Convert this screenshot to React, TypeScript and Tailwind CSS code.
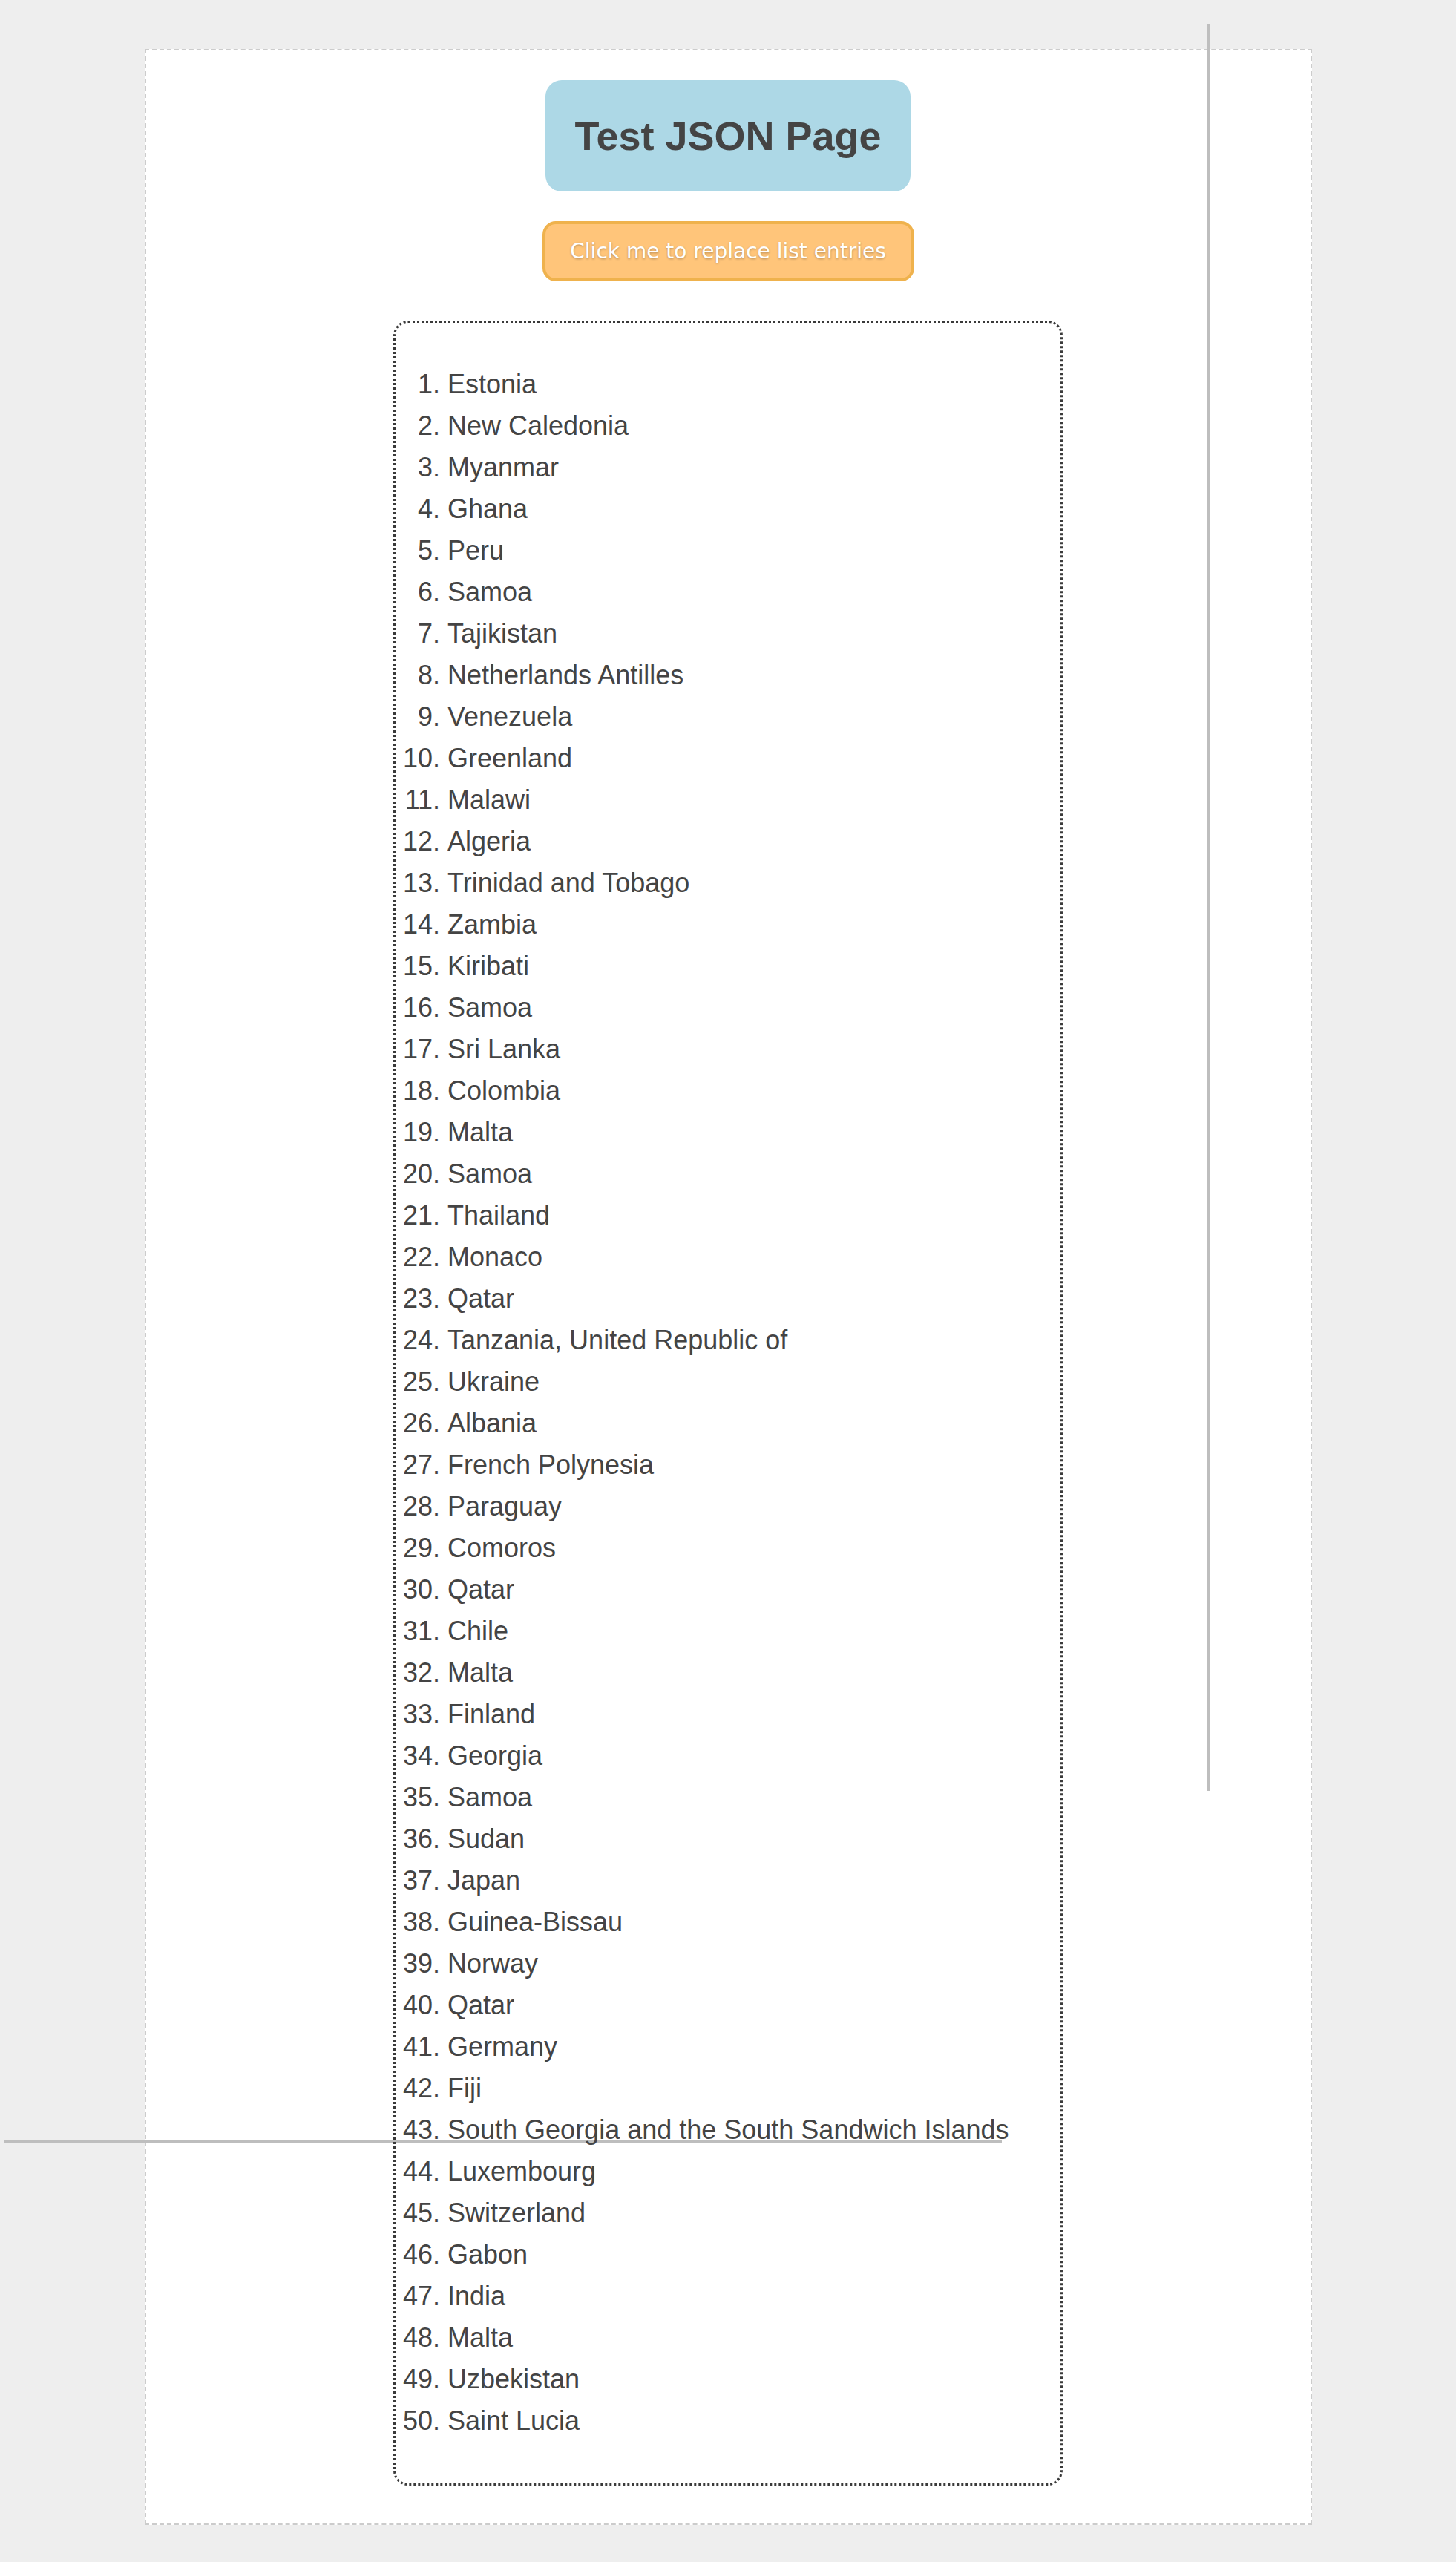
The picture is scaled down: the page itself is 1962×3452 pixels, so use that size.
import React from "react";

const countries = [
  "Estonia",
  "New Caledonia",
  "Myanmar",
  "Ghana",
  "Peru",
  "Samoa",
  "Tajikistan",
  "Netherlands Antilles",
  "Venezuela",
  "Greenland",
  "Malawi",
  "Algeria",
  "Trinidad and Tobago",
  "Zambia",
  "Kiribati",
  "Samoa",
  "Sri Lanka",
  "Colombia",
  "Malta",
  "Samoa",
  "Thailand",
  "Monaco",
  "Qatar",
  "Tanzania, United Republic of",
  "Ukraine",
  "Albania",
  "French Polynesia",
  "Paraguay",
  "Comoros",
  "Qatar",
  "Chile",
  "Malta",
  "Finland",
  "Georgia",
  "Samoa",
  "Sudan",
  "Japan",
  "Guinea-Bissau",
  "Norway",
  "Qatar",
  "Germany",
  "Fiji",
  "South Georgia and the South Sandwich Islands",
  "Luxembourg",
  "Switzerland",
  "Gabon",
  "India",
  "Malta",
  "Uzbekistan",
  "Saint Lucia",
];

export default function App() {
  return (
    <div className="relative min-h-[3452px] bg-[#eeeeee] pt-[66px] pb-[50px] [font-family:'Liberation_Sans',Arial,sans-serif] text-[#444444]">
      <div className="mx-auto flex w-[1573px] flex-col items-center border-2 border-dashed border-[#cccccc] bg-white pt-[40px] pb-[51px]">
        <div className="flex h-[150px] w-[492px] items-center justify-center rounded-[22px] bg-[#add8e6]">
          <h1 className="text-[54px] font-bold leading-none text-[#444444]">Test JSON Page</h1>
        </div>
        <button
          type="button"
          className="mt-[40px] flex h-[81px] w-[501px] items-center justify-center rounded-[18px] border-4 border-[#efb24d] bg-[#ffc57a] [font-family:'DejaVu_Sans',Verdana,sans-serif] text-[28px] leading-none text-white [text-shadow:0_1px_3px_rgba(0,0,0,0.3)]"
        >
          Click me to replace list entries
        </button>
        <div className="relative z-[1] mt-[53px] w-[902px] rounded-[20px] border-[3px] border-dotted border-[#3a3a3a] pt-[55px] pb-[56px] pl-[70px]">
          <ol className="list-decimal list-outside text-[36px] leading-[56px] text-[#444444]">
            {countries.map((c, i) => (
              <li key={i}>{c}</li>
            ))}
          </ol>
        </div>
      </div>
      <div className="absolute left-[1626px] top-[33px] h-[2380px] w-[5px] bg-[#bebebe]" />
      <div className="absolute left-[6px] top-[2883px] h-[5px] w-[1344px] bg-[#bebebe]" />
    </div>
  );
}
